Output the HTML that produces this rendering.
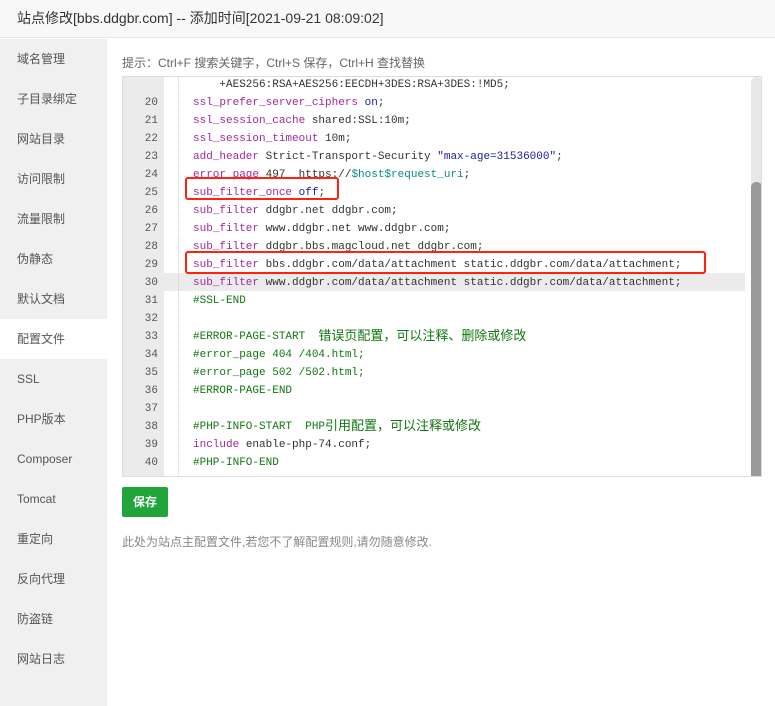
<!DOCTYPE html>
<html><head><meta charset="utf-8"><style>
*{margin:0;padding:0;box-sizing:border-box}
body{width:775px;height:706px;background:#fff;font-family:"Liberation Sans","Noto Sans CJK SC",sans-serif;position:relative;overflow:hidden}
.hd{position:absolute;left:0;top:0;width:775px;height:38px;background:#f8f8f8;border-bottom:1px solid #e6e6e6;font-size:14px;color:#333;line-height:37px;padding-left:17px}
.sb{position:absolute;left:0;top:39px;width:107px;height:667px;background:#f0f0f0}
.sb div{height:40px;line-height:40px;padding-left:17px;font-size:12px;color:#555}
.sb .on{background:#fff}
.tip{position:absolute;left:122px;top:54px;font-size:12px;color:#666}
.ed{position:absolute;left:122px;top:76px;width:640px;height:401px;border:1px solid #ddd;overflow:hidden}
.gut{position:absolute;left:0;top:0;width:41px;height:100%;background:#ebebeb}
.guide{position:absolute;left:55px;top:0;height:100%;border-left:1px dotted #ccc}
.ln{position:absolute;left:0;width:620px;height:18px;line-height:18px;font-family:"Liberation Mono","Noto Sans CJK SC",monospace;font-size:11px;color:#333;white-space:pre;overflow:hidden}
.ln b{font-weight:normal;display:inline-block;width:35px;text-align:right;color:#555;margin-right:35px;vertical-align:top}
.k{color:#a0299e}.s{color:#1a1aa6}.v{color:#0a8a8a}.c{color:#117711}
.cj{font-family:"Noto Sans CJK SC",sans-serif;font-size:13px;display:inline-block;height:18px;line-height:18px;vertical-align:top;position:relative;top:-2px}
.hl{position:absolute;left:41px;top:196px;width:581px;height:18px;background:#ebebeb}
.sc{position:absolute;left:628px;top:0;width:11px;height:100%;background:#e8e8e8;border-radius:5px}
.th{position:absolute;left:628px;top:105px;width:11px;height:300px;background:#999;border-radius:5px}
.rb{position:absolute;border:2px solid #f21;border-radius:3px}
.btn{position:absolute;left:122px;top:487px;width:46px;height:30px;background:#20a53a;color:#fff;font-size:12px;line-height:30px;text-align:center;border-radius:2px;font-weight:bold}
.note{position:absolute;left:122px;top:533px;font-size:12px;color:#888}
</style></head><body>
<div class="hd">站点修改[bbs.ddgbr.com] -- 添加时间[2021-09-21 08:09:02]</div>
<div class="sb">
<div>域名管理</div><div>子目录绑定</div><div>网站目录</div><div>访问限制</div><div>流量限制</div><div>伪静态</div><div>默认文档</div><div class="on">配置文件</div><div>SSL</div><div>PHP版本</div><div>Composer</div><div>Tomcat</div><div>重定向</div><div>反向代理</div><div>防盗链</div><div>网站日志</div>
</div>
<div class="tip">提示：Ctrl+F 搜索关键字，Ctrl+S 保存，Ctrl+H 查找替换</div>
<div class="ed">
<div class="gut"></div>
<div class="hl"></div>
<div class="guide"></div>
<div class="ln" style="top:-1px"><b></b>    +AES256:RSA+AES256:EECDH+3DES:RSA+3DES:!MD5;</div>
<div class="ln" style="top:17px"><b>20</b><span class="k">ssl_prefer_server_ciphers</span> <span class="s">on</span>;</div>
<div class="ln" style="top:35px"><b>21</b><span class="k">ssl_session_cache</span> shared:SSL:10m;</div>
<div class="ln" style="top:53px"><b>22</b><span class="k">ssl_session_timeout</span> 10m;</div>
<div class="ln" style="top:71px"><b>23</b><span class="k">add_header</span> Strict-Transport-Security <span class="s">"max-age=31536000"</span>;</div>
<div class="ln" style="top:89px"><b>24</b><span class="k">error_page</span> 497  https://<span class="v">$host$request_uri</span>;</div>
<div class="ln" style="top:107px"><b>25</b><span class="k">sub_filter_once</span> <span class="s">off</span>;</div>
<div class="ln" style="top:125px"><b>26</b><span class="k">sub_filter</span> ddgbr.net ddgbr.com;</div>
<div class="ln" style="top:143px"><b>27</b><span class="k">sub_filter</span> www.ddgbr.net www.ddgbr.com;</div>
<div class="ln" style="top:161px"><b>28</b><span class="k">sub_filter</span> ddgbr.bbs.magcloud.net ddgbr.com;</div>
<div class="ln" style="top:179px"><b>29</b><span class="k">sub_filter</span> bbs.ddgbr.com/data/attachment static.ddgbr.com/data/attachment;</div>
<div class="ln" style="top:197px"><b>30</b><span class="k">sub_filter</span> www.ddgbr.com/data/attachment static.ddgbr.com/data/attachment;</div>
<div class="ln" style="top:215px"><b>31</b><span class="c">#SSL-END</span></div>
<div class="ln" style="top:233px"><b>32</b></div>
<div class="ln" style="top:251px"><b>33</b><span class="c">#ERROR-PAGE-START  <span class="cj">错误页配置，可以注释、删除或修改</span></span></div>
<div class="ln" style="top:269px"><b>34</b><span class="c">#error_page 404 /404.html;</span></div>
<div class="ln" style="top:287px"><b>35</b><span class="c">#error_page 502 /502.html;</span></div>
<div class="ln" style="top:305px"><b>36</b><span class="c">#ERROR-PAGE-END</span></div>
<div class="ln" style="top:323px"><b>37</b></div>
<div class="ln" style="top:341px"><b>38</b><span class="c">#PHP-INFO-START  PHP<span class="cj">引用配置，可以注释或修改</span></span></div>
<div class="ln" style="top:359px"><b>39</b><span class="k">include</span> enable-php-74.conf;</div>
<div class="ln" style="top:377px"><b>40</b><span class="c">#PHP-INFO-END</span></div>
<div class="sc"></div><div class="th"></div>
</div>
<div class="rb" style="left:185px;top:177px;width:154px;height:23px"></div>
<div class="rb" style="left:185px;top:251px;width:521px;height:23px"></div>
<div class="btn">保存</div>
<div class="note">此处为站点主配置文件,若您不了解配置规则,请勿随意修改.</div>
</body></html>
